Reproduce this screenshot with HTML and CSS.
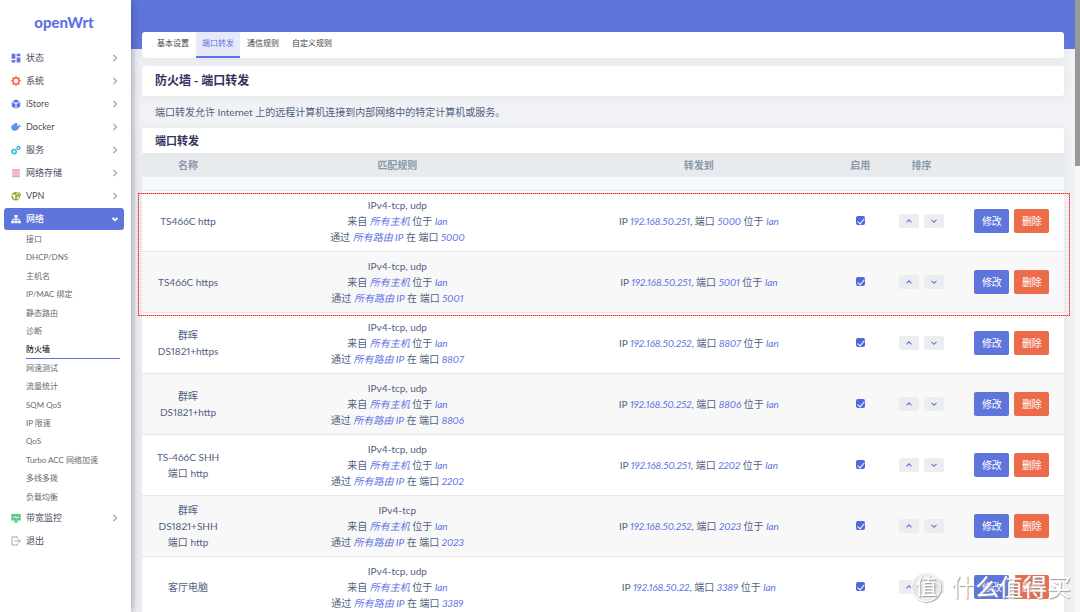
FILE: index.html
```html
<!DOCTYPE html>
<html lang="zh-CN">
<head>
<meta charset="utf-8">
<title>OpenWrt - 防火墙</title>
<link rel="stylesheet" href="styles.css">
</head>
<body>
<svg class="defs" aria-hidden="true">
  <symbol id="right" viewBox="0 0 8 8"><path d="M2.500 1l3 3-3 3" fill="none" stroke="currentColor" stroke-width="1.200"/></symbol>
  <symbol id="up" viewBox="0 0 8 8"><path d="M1.500 5.300L4 2.800l2.500 2.500" fill="none" stroke="currentColor" stroke-width="1.100"/></symbol>
  <symbol id="down" viewBox="0 0 8 8"><path d="M1.500 2.800L4 5.300l2.500-2.500" fill="none" stroke="currentColor" stroke-width="1.100"/></symbol>
  <symbol id="open" viewBox="0 0 8 8"><path d="M1.500 2.800L4 5.300l2.500-2.500" fill="none" stroke="currentColor" stroke-width="1.800"/></symbol>
</svg>
<div class="app">
  <aside class="sidebar">
    <a class="logo" href="#">openWrt</a>
    <ul class="menu">
      <li><a href="#"><svg class="icon blue" viewBox="0 0 16 16"><path fill="currentColor" d="M1 1h6v8H1zM9 1h6v4H9zM1 11h6v4H1zM9 7h6v8H9z"/></svg>状态<svg class="arrow"><use href="#right"/></svg></a></li>
      <li><a href="#"><svg class="icon orange" viewBox="0 0 16 16"><circle cx="8" cy="8" r="4.800" fill="none" stroke="currentColor" stroke-width="2.200"/><path d="M8 .5v2.500M8 13v2.500M.5 8H3M13 8h2.500M2.700 2.700l1.800 1.800M11.500 11.500l1.800 1.800M2.700 13.300l1.800-1.800M11.500 4.500l1.800-1.800" stroke="currentColor" stroke-width="2.600"/></svg>系统<svg class="arrow"><use href="#right"/></svg></a></li>
      <li><a href="#"><svg class="icon blue" viewBox="0 0 16 16"><path fill="currentColor" d="M8 .8l6 2.700-6 3-6-3zM1.200 4.800l6 3v7.400l-6-3.200zM14.800 4.800l-6 3v7.400l6-3.200z"/></svg>iStore<svg class="arrow"><use href="#right"/></svg></a></li>
      <li><a href="#"><svg class="icon docker" viewBox="0 0 16 16"><path fill="currentColor" d="M1 7V5h2.500V3H6V1.500h4V6.500h2c-.3-1 0-2 .6-2.800.9.600 1.300 1.300 1.300 2.200.7-.1 1.500 0 2.100.4-.5 1.200-1.500 1.700-2.900 1.700C12 12 9.500 14 6 14 2.500 14 .2 11 0 7z"/></svg>Docker<svg class="arrow"><use href="#right"/></svg></a></li>
      <li><a href="#"><svg class="icon cyan" viewBox="0 0 16 16"><g fill="none" stroke="currentColor"><circle cx="5" cy="10.500" r="3.400" stroke-width="2.400"/><circle cx="12" cy="4.500" r="2.500" stroke-width="2"/></g></svg>服务<svg class="arrow"><use href="#right"/></svg></a></li>
      <li><a href="#"><svg class="icon pink" viewBox="0 0 16 16"><path fill="currentColor" d="M2 1.500h12v3H2zM2 5.200h12v2.500H2zM2 8.400h12v2.500H2zM2 11.600h12v3H2z"/></svg>网络存储<svg class="arrow"><use href="#right"/></svg></a></li>
      <li><a href="#"><svg class="icon olive" viewBox="0 0 16 16"><circle cx="7.500" cy="8.500" r="6.800" fill="currentColor"/><path d="M3 5l3 1 2 2-2 1 1 3-2 1-1-3-2-2zM9 2l2 3-2 1zM10 9l3 1-2 3-2-1z" fill="#fff"/><path d="M10 4h6v4h-6zM11.500 4V2.500q1.500-2 3 0V4" fill="currentColor" stroke="#fff" stroke-width=".6"/></svg>VPN<svg class="arrow"><use href="#right"/></svg></a></li>
      <li>
        <a class="current" href="#"><svg class="icon" viewBox="0 0 16 16"><path fill="currentColor" d="M5.500 1.500h5v4.500H8.700v1.600h5v3H15.500v4h-4.600v-4h1.400V9H8.700v1.600h1.400v4H5.900v-4h1.400V9H3.700v1.600h1.400v4H.5v-4h1.800v-3h5V6H5.500z"/></svg>网络<svg class="arrow"><use href="#open"/></svg></a>
        <ul class="submenu">
          <li><a href="#">接口</a></li>
          <li><a href="#">DHCP/DNS</a></li>
          <li><a href="#">主机名</a></li>
          <li><a href="#">IP/MAC 绑定</a></li>
          <li><a href="#">静态路由</a></li>
          <li><a href="#">诊断</a></li>
          <li><a class="selected" href="#">防火墙</a></li>
          <li><a href="#">网速测试</a></li>
          <li><a href="#">流量统计</a></li>
          <li><a href="#">SQM QoS</a></li>
          <li><a href="#">IP 限速</a></li>
          <li><a href="#">QoS</a></li>
          <li><a href="#">Turbo ACC 网络加速</a></li>
          <li><a href="#">多线多拨</a></li>
          <li><a href="#">负载均衡</a></li>
        </ul>
      </li>
      <li><a href="#"><svg class="icon green" viewBox="0 0 16 16"><path fill="currentColor" d="M.5 1.500h15v10.500h-6v1.500h2V15h-7v-1.500h2V12h-6z"/><path d="M3 7h2.500l1.500-2 2 3.500L10.500 6l1 1H13" fill="none" stroke="#fff" stroke-width="1.300"/></svg>带宽监控<svg class="arrow"><use href="#right"/></svg></a></li>
      <li><a href="#"><svg class="icon gray" viewBox="0 0 16 16"><path d="M10 4V1.500H1.500v13H10V12M5.500 8h9M12 5l3 3-3 3" fill="none" stroke="currentColor" stroke-width="1.300"/></svg>退出</a></li>
    </ul>
  </aside>

  <main class="content">
    <nav class="card tabs">
      <a href="#">基本设置</a>
      <a class="active" href="#">端口转发</a>
      <a href="#">通信规则</a>
      <a href="#">自定义规则</a>
    </nav>
    <h2 class="card title">防火墙 - 端口转发</h2>
    <p class="intro">端口转发允许 Internet 上的远程计算机连接到内部网络中的特定计算机或服务。</p>
    <section class="card rules">
      <h3>端口转发</h3>
      <table>
        <colgroup><col class="c-name"><col class="c-match"><col class="c-target"><col class="c-on"><col class="c-sort"><col class="c-act"></colgroup>
        <thead>
          <tr><th>名称</th><th>匹配规则</th><th>转发到</th><th>启用</th><th>排序</th><th></th></tr>
          <tr class="filler"><td colspan="6"></td></tr>
        </thead>
        <tbody>
          <tr>
            <td>TS466C http</td>
            <td>IPv4-tcp, udp<br>来自 <i>所有主机</i> 位于 <i>lan</i><br>通过 <i>所有路由 IP</i> 在 端口 <i>5000</i></td>
            <td>IP <i>192.168.50.251</i>, 端口 <i>5000</i> 位于 <i>lan</i></td>
            <td><input type="checkbox" checked aria-label="启用"></td>
            <td><div class="sort"><button aria-label="上移"><svg><use href="#up"/></svg></button><button aria-label="下移"><svg><use href="#down"/></svg></button></div></td>
            <td><div class="actions"><button class="edit">修改</button><button class="delete">删除</button></div></td>
          </tr>
          <tr>
            <td>TS466C https</td>
            <td>IPv4-tcp, udp<br>来自 <i>所有主机</i> 位于 <i>lan</i><br>通过 <i>所有路由 IP</i> 在 端口 <i>5001</i></td>
            <td>IP <i>192.168.50.251</i>, 端口 <i>5001</i> 位于 <i>lan</i></td>
            <td><input type="checkbox" checked aria-label="启用"></td>
            <td><div class="sort"><button aria-label="上移"><svg><use href="#up"/></svg></button><button aria-label="下移"><svg><use href="#down"/></svg></button></div></td>
            <td><div class="actions"><button class="edit">修改</button><button class="delete">删除</button></div></td>
          </tr>
          <tr>
            <td>群晖<br>DS1821+https</td>
            <td>IPv4-tcp, udp<br>来自 <i>所有主机</i> 位于 <i>lan</i><br>通过 <i>所有路由 IP</i> 在 端口 <i>8807</i></td>
            <td>IP <i>192.168.50.252</i>, 端口 <i>8807</i> 位于 <i>lan</i></td>
            <td><input type="checkbox" checked aria-label="启用"></td>
            <td><div class="sort"><button aria-label="上移"><svg><use href="#up"/></svg></button><button aria-label="下移"><svg><use href="#down"/></svg></button></div></td>
            <td><div class="actions"><button class="edit">修改</button><button class="delete">删除</button></div></td>
          </tr>
          <tr>
            <td>群晖<br>DS1821+http</td>
            <td>IPv4-tcp, udp<br>来自 <i>所有主机</i> 位于 <i>lan</i><br>通过 <i>所有路由 IP</i> 在 端口 <i>8806</i></td>
            <td>IP <i>192.168.50.252</i>, 端口 <i>8806</i> 位于 <i>lan</i></td>
            <td><input type="checkbox" checked aria-label="启用"></td>
            <td><div class="sort"><button aria-label="上移"><svg><use href="#up"/></svg></button><button aria-label="下移"><svg><use href="#down"/></svg></button></div></td>
            <td><div class="actions"><button class="edit">修改</button><button class="delete">删除</button></div></td>
          </tr>
          <tr>
            <td>TS-466C SHH<br>端口 http</td>
            <td>IPv4-tcp, udp<br>来自 <i>所有主机</i> 位于 <i>lan</i><br>通过 <i>所有路由 IP</i> 在 端口 <i>2202</i></td>
            <td>IP <i>192.168.50.251</i>, 端口 <i>2202</i> 位于 <i>lan</i></td>
            <td><input type="checkbox" checked aria-label="启用"></td>
            <td><div class="sort"><button aria-label="上移"><svg><use href="#up"/></svg></button><button aria-label="下移"><svg><use href="#down"/></svg></button></div></td>
            <td><div class="actions"><button class="edit">修改</button><button class="delete">删除</button></div></td>
          </tr>
          <tr>
            <td>群晖<br>DS1821+SHH<br>端口 http</td>
            <td>IPv4-tcp<br>来自 <i>所有主机</i> 位于 <i>lan</i><br>通过 <i>所有路由 IP</i> 在 端口 <i>2023</i></td>
            <td>IP <i>192.168.50.252</i>, 端口 <i>2023</i> 位于 <i>lan</i></td>
            <td><input type="checkbox" checked aria-label="启用"></td>
            <td><div class="sort"><button aria-label="上移"><svg><use href="#up"/></svg></button><button aria-label="下移"><svg><use href="#down"/></svg></button></div></td>
            <td><div class="actions"><button class="edit">修改</button><button class="delete">删除</button></div></td>
          </tr>
          <tr>
            <td>客厅电脑</td>
            <td>IPv4-tcp, udp<br>来自 <i>所有主机</i> 位于 <i>lan</i><br>通过 <i>所有路由 IP</i> 在 端口 <i>3389</i></td>
            <td>IP <i>192.168.50.22</i>, 端口 <i>3389</i> 位于 <i>lan</i></td>
            <td><input type="checkbox" checked aria-label="启用"></td>
            <td><div class="sort"><button aria-label="上移"><svg><use href="#up"/></svg></button><button aria-label="下移"><svg><use href="#down"/></svg></button></div></td>
            <td><div class="actions"><button class="edit">修改</button><button class="delete">删除</button></div></td>
          </tr>
        </tbody>
      </table>
      <div class="highlight"></div>
    </section>
  </main>
  <div class="scrollbar"><div class="thumb"></div></div>
</div>
<div class="watermark"><span class="seal">值</span><span>什么值得买</span></div>
</body>
</html>
```
FILE: styles.css
```css
* {
  box-sizing: border-box;
}

body {
  margin: 0;
  background: #f1f2f5;
  color: #525f7f;
  font: 10px/16px Lato, "Noto Sans CJK SC", sans-serif;
  font-variant-numeric: proportional-nums;
}

a {
  color: inherit;
  text-decoration: none;
}

ul {
  margin: 0;
  padding: 0;
  list-style: none;
}

button {
  padding: 0;
  border: 0;
  font: inherit;
}

.defs {
  display: none;
}

.app {
  display: flex;
  height: 100vh;
  overflow: hidden;
}

/* Sidebar */
.sidebar {
  z-index: 1;
  flex: 0 0 131px;
  padding: 0 7px 0 4px;
  background: #fff;
  box-shadow: 1px 0 8px rgba(60, 64, 80, 0.5);
}

.logo {
  display: block;
  height: 47px;
  padding-top: 10px;
  color: #5e72e4;
  font-size: 15px;
  font-weight: 900;
  line-height: 24px;
  text-align: center;
}

.menu > li > a {
  display: flex;
  align-items: center;
  height: 22px;
  margin-bottom: 1px;
  padding: 0 5px 0 7px;
  border-radius: 3px;
  color: #4b4d5c;
  font-size: 9px;
}

.menu > li > .current {
  background: #5e76dc;
  color: #fff;
  font-weight: 500;
}

.icon {
  width: 10px;
  height: 10px;
  margin-right: 5px;
}

.arrow {
  width: 8px;
  height: 8px;
  margin-left: auto;
  color: #a2a4ac;
}

.current .arrow {
  color: #fff;
}

.blue { color: #5e72e4; }
.orange { color: #fb6340; }
.docker { color: #5a94e8; }
.cyan { color: #22b8d8; }
.pink { color: #f0a0b4; }
.olive { color: #a0a030; }
.green { color: #4fce7e; }
.gray { color: #8898aa; }

.submenu {
  display: grid;
  grid-auto-rows: 1fr;
  min-height: 276px;
  padding: 0 4px 0 22px;
}

.submenu a {
  display: block;
  border-bottom: 1px solid transparent;
  color: #6a6a6e;
  font-size: 8px;
  line-height: 17px;
}

.submenu .selected {
  border-color: #5e72e4;
  color: #222;
  font-weight: 500;
}

/* Main column */
.content {
  flex: 1;
  min-width: 0;
  padding: 32px 11px 0;
  background: linear-gradient(#5e76dc 49px, transparent 49px);
}

.card {
  border-radius: 3px;
  background: #fff;
  box-shadow: 0 1px 8px rgba(136, 152, 170, 0.15);
}

.tabs {
  display: flex;
  gap: 1px;
  height: 26px;
  padding: 0 9px;
  overflow: hidden;
  color: #444;
  font-size: 8px;
  line-height: 23px;
}

.tabs a {
  padding: 0 6px;
}

.tabs .active {
  border-bottom: 2px solid #5e72e4;
  background: #e6e9fa;
  color: #5e72e4;
}

.title {
  margin: 8px 0;
  padding: 7px 13px;
  color: #32325d;
  font-size: 12px;
}

.intro {
  margin: 0;
  padding: 0 13px 8px;
}

.rules {
  position: relative;
}

.rules h3 {
  margin: 0;
  padding: 5px 13px 4px;
  color: #32325d;
  font-size: 11px;
}

table {
  width: 100%;
  border-collapse: collapse;
  table-layout: fixed;
  text-align: center;
}

.c-name { width: 10%; }
.c-match { width: 35.4%; }
.c-target { width: 30%; }
.c-on { width: 5%; }
.c-sort { width: 8.3%; }

th {
  padding: 4px 0;
  background: #e8ebee;
  color: #8898aa;
}

.filler td {
  height: 13px;
  background: #f6f9fc;
}

td {
  padding: 0;
}

tbody td {
  padding: 6px 0;
  border-top: 1px solid #e6e8eb;
}

tbody tr:nth-child(even) {
  background: #f8f8f8;
}

i {
  color: #5e72e4;
}

input[type="checkbox"] {
  appearance: none;
  display: block;
  width: 9px;
  height: 9px;
  margin: 0 auto;
  padding: 1px 3px;
  border-radius: 2px;
  background: #4f68dc;
}

input[type="checkbox"]::after {
  content: "";
  display: block;
  width: 3px;
  height: 6px;
  border: solid #fff;
  border-width: 0 1px 1px 0;
  transform: rotate(40deg);
}

.sort,
.actions {
  display: flex;
  justify-content: center;
  gap: 5px;
}

.sort button {
  display: grid;
  place-items: center;
  width: 20px;
  height: 14px;
  border-radius: 2px;
  background: #ebedf0;
  color: #5e72e4;
}

.sort svg {
  width: 8px;
  height: 8px;
}

.actions button {
  width: 35px;
  height: 24px;
  border-radius: 2px;
  color: #fff;
}

.actions .edit {
  background: #5e76dc;
}

.actions .delete {
  background: #ec6b49;
}

/* Marks the first two rules */
.highlight {
  position: absolute;
  top: 65px;
  right: -6px;
  left: -4px;
  height: 123px;
  border: 1px dotted #f00;
  outline: 1px solid rgba(255, 60, 60, 0.5);
  outline-offset: -1px;
}

.scrollbar {
  flex: 0 0 5px;
  background: #f8f8f9;
}

.thumb {
  height: 166px;
  background: #999;
}

.watermark {
  position: absolute;
  z-index: 2;
  right: 9px;
  bottom: 10px;
  display: flex;
  align-items: center;
  gap: 10px;
  color: #fff;
  font-size: 24px;
  line-height: 28px;
  text-shadow: 1px 1px 1px #999;
}

.seal {
  width: 30px;
  height: 30px;
  border: 1px solid #fff;
  border-radius: 50%;
  background: rgba(225, 225, 225, 0.6);
  box-shadow: 1px 1px 1px #aaa;
  font-size: 22px;
  line-height: 26px;
  text-align: center;
}
```
